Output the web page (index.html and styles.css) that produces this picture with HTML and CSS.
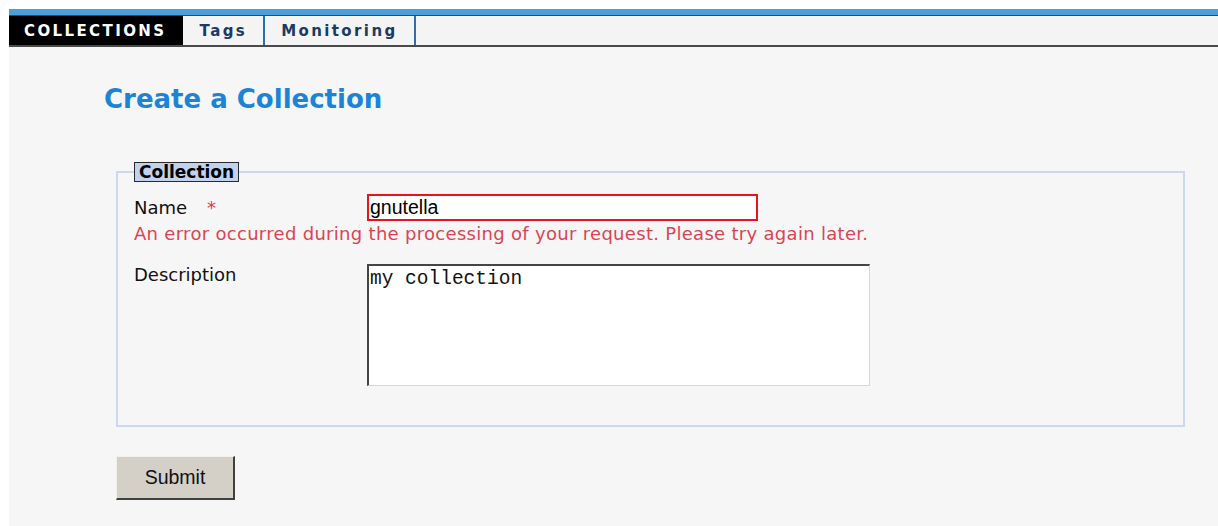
FILE: index.html
```html
<!DOCTYPE html>
<html lang="en">
<head>
<meta charset="utf-8">
<title>Create a Collection</title>
<link rel="stylesheet" href="styles.css">
</head>
<body>
  <div class="topbar"></div>
  <nav class="tabs">
    <a class="tab tab-active" href="#">COLLECTIONS</a>
    <a class="tab" href="#">Tags</a>
    <a class="tab" href="#">Monitoring</a>
  </nav>
  <main class="page">
    <h1 class="title">Create a Collection</h1>
    <form class="form">
      <fieldset class="group">
        <legend class="group-legend">Collection</legend>
        <div class="row row-center">
          <label class="label" for="name">Name<span class="req">*</span></label>
          <input class="field field-error" id="name" type="text" value="gnutella">
        </div>
        <div class="error">An error occurred during the processing of your request. Please try again later.</div>
        <div class="row row-desc">
          <label class="label" for="desc">Description</label>
          <textarea class="area" id="desc">my collection</textarea>
        </div>
      </fieldset>
      <button class="submit" type="button">Submit</button>
    </form>
  </main>
</body>
</html>
```

FILE: styles.css
```css
html, body {
  height: 100%;
}

body {
  margin: 9px 0 0 9px;
  background: #ffffff;
  font-family: "DejaVu Sans", Verdana, sans-serif;
  display: flex;
  flex-direction: column;
}

.topbar {
  flex: none;
  height: 6px;
  background: #4a9fe0;
  border-bottom: 1px solid #1f4e79;
}

.tabs {
  flex: none;
  display: flex;
  height: 29px;
  background: #f4f4f4;
  border-bottom: 2px solid #4a4a4a;
}

.tab {
  display: flex;
  align-items: center;
  padding: 0 16px;
  border-right: 2px solid #2a6db5;
  font-weight: bold;
  font-size: 15px;
  letter-spacing: 2.4px;
  color: #1b3a66;
  text-decoration: none;
}

.tab-active {
  padding: 0 15px;
  background: #000000;
  color: #ffffff;
  border-right-color: #000000;
}

.page {
  flex: 1;
  background: #f6f6f6;
  padding: 0 33px 0 0;
}

.title {
  margin: 36px 0 47px 95px;
  font-size: 26px;
  line-height: 32px;
  font-weight: bold;
  color: #1c84d6;
}

.form {
  margin-left: 107px;
}

.group {
  margin: 0;
  padding: 12px 16px 39px 16px;
  border: 2px solid #cbd8ee;
}

.group-legend {
  margin-left: 0;
  padding: 0 4px;
  background: #c3d2ec;
  border: 1px solid #2a2a2a;
  font-weight: bold;
  font-size: 17px;
  line-height: 18px;
  color: #000000;
}

.row {
  display: grid;
  grid-template-columns: 233px auto;
}

.row-center {
  align-items: center;
}

.row-desc {
  margin-top: 20px;
  align-items: start;
}

.label {
  font-size: 18px;
  line-height: 21px;
  color: #111111;
}

.req {
  margin-left: 20px;
  color: #e8343c;
}

.field {
  box-sizing: border-box;
  width: 391px;
  height: 27px;
  margin: 0;
  padding: 0 1px;
  background: #ffffff;
  font-family: "Liberation Sans", Arial, sans-serif;
  font-size: 19.5px;
  color: #000000;
  outline: none;
}

.field-error {
  border: 2px solid #e8141c;
}

.error {
  margin-top: 2px;
  font-size: 18px;
  line-height: 21px;
  letter-spacing: 0.3px;
  color: #df4353;
}

.area {
  box-sizing: border-box;
  width: 503px;
  height: 122px;
  margin: 0;
  padding: 2px 1px;
  resize: none;
  background: #ffffff;
  border-style: solid;
  border-width: 2px 1px 1px 2px;
  border-color: #444444 #d8d6d0 #d8d6d0 #444444;
  font-family: "Liberation Mono", "Courier New", monospace;
  font-size: 19.5px;
  line-height: 22px;
  color: #111111;
  outline: none;
}

.submit {
  box-sizing: border-box;
  width: 119px;
  height: 44px;
  margin-top: 29px;
  padding: 0;
  background: #d4d0c8;
  border-style: solid;
  border-width: 1px 2px 2px 1px;
  border-color: #f2f0ec #404040 #404040 #f2f0ec;
  font-family: "Liberation Sans", Arial, sans-serif;
  font-size: 19.5px;
  color: #111111;
}
```
